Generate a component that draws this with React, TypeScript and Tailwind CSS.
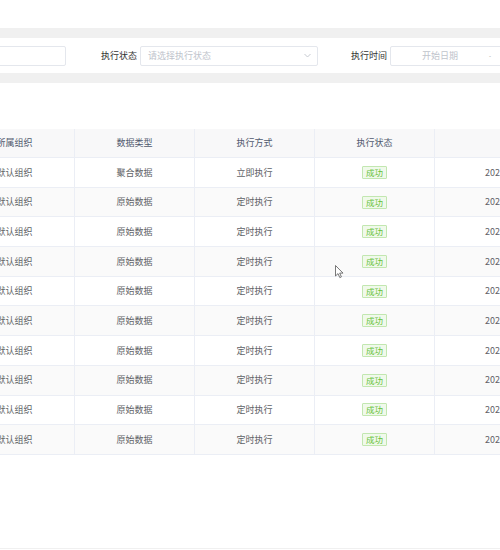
import React from 'react';

const rows = [
  { org: '默认组织', type: '聚合数据', mode: '立即执行' },
  ...Array.from({ length: 9 }, () => ({ org: '默认组织', type: '原始数据', mode: '定时执行' })),
];

const font = { fontFamily: '"Noto Sans CJK SC", "Noto Sans", sans-serif' };

export default function App() {
  return (
    <div className="relative w-[500px] h-[550px] overflow-hidden bg-white text-[9px] text-[#606266]" style={font}>
      <div className="h-[28px]" />
      <div className="h-[10px] bg-[#f0f0f0]" />

      {/* filters */}
      <div className="h-[35px] flex items-center -ml-[114px] whitespace-nowrap">
        <div className="w-[180px] h-[20px] shrink-0 border border-[#e4e7ed] rounded-[2px] bg-white" />
        <span className="ml-[35px] w-[36px] shrink-0 text-[#333]">执行状态</span>
        <div className="ml-[3px] w-[178px] h-[20px] shrink-0 border border-[#e4e7ed] rounded-[2px] bg-white flex items-center justify-between pl-[7px] pr-[6px]">
          <span className="text-[#c0c4cc]">请选择执行状态</span>
          <svg width="7" height="5" viewBox="0 0 7 5" fill="none" stroke="#c0c4cc" strokeWidth="0.9">
            <path d="M0.5 1 L3.5 4 L6.5 1" />
          </svg>
        </div>
        <span className="ml-[33px] w-[36px] shrink-0 text-[#333]">执行时间</span>
        <div className="ml-[3px] w-[200px] h-[20px] shrink-0 border border-[#e4e7ed] rounded-[2px] bg-white flex items-center">
          <span className="w-[98px] text-center text-[#c0c4cc]">开始日期</span>
          <span className="text-[#999] text-[6px]">-</span>
        </div>
      </div>

      <div className="h-[10px] bg-[#f0f0f0]" />
      <div className="h-[46px]" />

      {/* table */}
      <div className="-ml-[45px] w-[700px]">
        <div className="flex h-[29px] bg-[#f8f8f9] text-[#515a6e] border-b border-[#ebeef5]">
          {['所属组织', '数据类型', '执行方式', '执行状态', ''].map((h, i) => (
            <div key={i} className="w-[120px] shrink-0 flex items-center justify-center border-r border-[#ebeef5]">
              {h}
            </div>
          ))}
        </div>
        {rows.map((r, i) => (
          <div
            key={i}
            className={`flex h-[29.7px] border-b border-[#ebeef5] ${i % 2 === 1 ? 'bg-[#fafafa]' : 'bg-white'}`}
          >
            <div className="w-[120px] shrink-0 flex items-center justify-center border-r border-[#ebeef5]">{r.org}</div>
            <div className="w-[120px] shrink-0 flex items-center justify-center border-r border-[#ebeef5]">{r.type}</div>
            <div className="w-[120px] shrink-0 flex items-center justify-center border-r border-[#ebeef5]">{r.mode}</div>
            <div className="w-[120px] shrink-0 flex items-center justify-center border-r border-[#ebeef5]">
              <span className="h-[13px] px-[3px] flex items-center border border-[#c2e7b0] bg-[#f0f9eb] text-[#67c23a] rounded-[1px] text-[8.5px]">
                成功
              </span>
            </div>
            <div className="w-[120px] shrink-0 flex items-center pl-[50px] whitespace-nowrap border-r border-[#ebeef5]">
              2023-08-15 10:30:00
            </div>
          </div>
        ))}
      </div>

      <div className="absolute left-0 top-[548px] w-full h-px bg-[#f0f0f0]" />

      {/* mouse cursor */}
      <svg className="absolute left-[335px] top-[265px]" width="9" height="14" viewBox="0 0 9 14">
        <path d="M0.5 0.5 L0.5 11 L3 8.6 L4.8 12.6 L6.4 11.9 L4.7 8.1 L8 8.1 Z" fill="#fff" stroke="#555" strokeWidth="0.8" />
      </svg>
    </div>
  );
}
